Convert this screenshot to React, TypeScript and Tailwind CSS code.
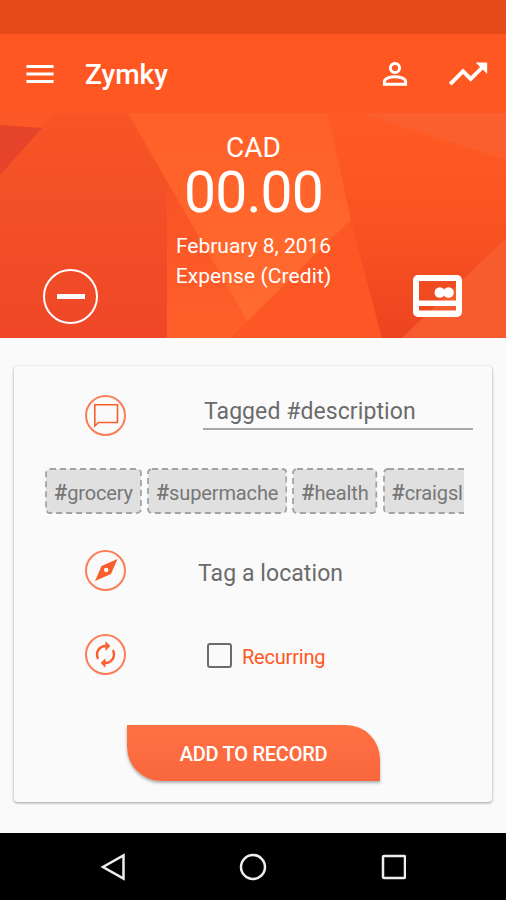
import type { ReactNode } from 'react';
import { MdMenu, MdTrendingUp } from 'react-icons/md';

const tags = ['grocery', 'supermache', 'health', 'craigsl'];

function HeroBackdrop() {
  return (
    <svg className="absolute inset-0 h-full w-full" viewBox="0 113 506 225" preserveAspectRatio="none">
      <defs>
        <linearGradient id="left" x1="0" y1="0" x2="0" y2="1">
          <stop offset="0" stopColor="#f85426" />
          <stop offset="0.4" stopColor="#f25027" />
          <stop offset="1" stopColor="#ef4728" />
        </linearGradient>
        <linearGradient id="right" x1="0" y1="0" x2="0" y2="1">
          <stop offset="0" stopColor="#ff5a24" />
          <stop offset="0.45" stopColor="#fb5422" />
          <stop offset="1" stopColor="#ec4420" />
        </linearGradient>
        <linearGradient id="mid" x1="0" y1="0" x2="0" y2="1">
          <stop offset="0" stopColor="#f75225" />
          <stop offset="1" stopColor="#ff6029" />
        </linearGradient>
        <linearGradient id="center" x1="0" y1="0" x2="0" y2="1">
          <stop offset="0" stopColor="#ff6028" />
          <stop offset="1" stopColor="#ff6b30" />
        </linearGradient>
      </defs>
      <rect y="113" width="506" height="225" fill="url(#left)" />
      <polygon points="0,113 52,113 42,128 0,125" fill="#fb5926" />
      <polygon points="0,125 42,128 0,175" fill="#e6442a" />
      <polygon points="167,180 260,338 167,338" fill="url(#mid)" />
      <polygon points="128,113 328,113 351,220 248,322" fill="url(#center)" />
      <polygon points="351,220 230,338 382,338" fill="#fc5724" />
      <polygon points="328,113 506,113 506,338 382,338 351,220" fill="url(#right)" />
      <polygon points="360,113 506,113 506,160" fill="#fa5f2d" />
      <polygon points="506,238 506,338 402,338" fill="#f75c2f" />
    </svg>
  );
}

function RoundIcon({ children }: { children: ReactNode }) {
  return (
    <span className="flex size-[41px] items-center justify-center rounded-full border-2 border-[#fa7e58] text-[#f95f2d]">
      {children}
    </span>
  );
}

function TagChip({ label }: { label: string }) {
  return (
    <div className="relative h-[46px] shrink-0 pl-[9px] pr-[9px] text-xl leading-[49px] tracking-[-0.13px] text-[#777]">
      <svg className="absolute inset-0 h-full w-full">
        <rect
          x="1"
          y="1"
          rx="4"
          className="h-[calc(100%-2px)] w-[calc(100%-2px)]"
          fill="#e0e0e0"
          stroke="#a3a3a3"
          strokeWidth="1.8"
          strokeDasharray="6 4"
        />
      </svg>
      <span className="relative">
        <span className="text-[22px] font-medium text-[#757575]">#</span>
        {label}
      </span>
    </div>
  );
}

export default function App() {
  return (
    <div className="flex h-[900px] w-[506px] flex-col overflow-hidden bg-[#fafafa] font-['Roboto',sans-serif]">
      <div className="h-[34px] shrink-0 bg-[#e64a19]" />

      <header className="flex h-[79px] shrink-0 items-center bg-[#ff5722] pl-[22px] pr-[15px] text-white">
        <MdMenu size={36} />
        <h1 className="ml-[27px] pt-[3px] text-[28px] font-medium leading-none">Zymky</h1>
        <svg className="ml-auto size-9" viewBox="0 0 24 24" fill="none" stroke="currentColor" strokeWidth="2">
          <circle cx="12" cy="8" r="3.05" />
          <path d="M4.95 18.9v-1.9c0-2.1 4.2-3.25 7.05-3.25s7.05 1.15 7.05 3.25v1.9z" />
        </svg>
        <MdTrendingUp size={46} className="ml-[32px]" />
      </header>

      <section className="relative h-[225px] shrink-0 text-white">
        <HeroBackdrop />
        <div className="relative flex flex-col items-center pl-px pt-[19px]">
          <div className="text-[28px] leading-8">CAD</div>
          <div className="text-[57px] leading-[58px] tracking-[-0.8px]">00.00</div>
          <div className="mt-[9px] text-[21px] leading-[30px]">February 8, 2016</div>
          <div className="text-[21px] leading-[30px] tracking-[0.1px]">Expense (Credit)</div>
        </div>
        <div className="absolute left-[43px] top-[156px] flex size-[55px] items-center justify-center rounded-full border-2 border-white">
          <span className="h-[5px] w-7 bg-white" />
        </div>
        <svg className="absolute left-[413px] top-[162px] h-[43px] w-[49px]" viewBox="0 0 49 43">
          <path
            fill="#fff"
            fillRule="evenodd"
            d="M5 0h39a5 5 0 0 1 5 5v32a5 5 0 0 1-5 5H5a5 5 0 0 1-5-5V5a5 5 0 0 1 5-5zM6 6v19.500h37V6zM6 31v4.500h37V31z"
          />
          <circle cx="26.800" cy="17.500" r="5.300" fill="#fff" />
          <circle cx="35.500" cy="17.500" r="5.300" fill="#fff" />
        </svg>
      </section>

      <main className="mx-[14px] mt-[28px] flex h-[436px] shrink-0 flex-col rounded-[4px] bg-[#fafafa] shadow-[0_1px_3px_rgba(0,0,0,0.38)]">
        <div className="flex h-[64px] items-end pl-[71px]">
          <div className="mb-[-6px]">
            <RoundIcon>
              <svg className="size-[26px]" viewBox="0 0 26 26" fill="none" stroke="currentColor" strokeWidth="1.6">
                <path d="M1.800 1.800h22.700v17.700H5.500l-3.700 3.500z" />
              </svg>
            </RoundIcon>
          </div>
          <div className="ml-[77px] h-[36px] w-[270px] border-b-2 border-[#a9a9a9] pl-px pt-[2px] text-[23px] leading-8 tracking-[0.08px] text-[#6b6b6b]">
            Tagged #description
          </div>
        </div>

        <div className="ml-[31px] mt-[38px] flex w-[419px] gap-[5px] overflow-hidden">
          {tags.map((tag) => (
            <TagChip key={tag} label={tag} />
          ))}
        </div>

        <div className="mt-[35px] flex h-[42px] items-center pl-[71px]">
          <RoundIcon>
            <svg className="size-6" viewBox="0 0 24 24" fill="currentColor" fillRule="evenodd">
              <path d="M23.500 1 17 16 1 23 7.500 8zM12.200 9.800a2.200 2.200 0 1 0 0 4.400 2.200 2.200 0 0 0 0-4.400z" />
            </svg>
          </RoundIcon>
          <span className="ml-[72px] mt-[7px] text-[23px] leading-7 tracking-[0.08px] text-[#6b6b6b]">Tag a location</span>
        </div>

        <div className="mt-[42px] flex h-[42px] items-center pl-[71px]">
          <RoundIcon>
            <svg className="size-[29px]" viewBox="0 0 24 24" fill="currentColor">
              <path d="M12 6v3l4-4-4-4v3c-4.420 0-8 3.580-8 8 0 1.570.460 3.030 1.240 4.260L6.700 14.800A5.870 5.870 0 0 1 6 12c0-3.310 2.690-6 6-6zm6.760 1.740L17.300 9.200c.440.840.700 1.790.700 2.800 0 3.310-2.690 6-6 6v-3l-4 4 4 4v-3c4.420 0 8-3.580 8-8 0-1.570-.460-3.030-1.240-4.260z" />
            </svg>
          </RoundIcon>
          <span className="ml-[81px] mt-[3px] size-[25px] rounded-[3px] border-[2.500px] border-[#6b6b6b]" />
          <span className="ml-[10px] mt-[5px] text-xl leading-6 tracking-[-0.2px] text-[#ff5722]">Recurring</span>
        </div>

        <button className="ml-[113px] mt-[50px] h-14 w-[253px] rounded-bl-[34px] rounded-tr-[34px] bg-linear-to-b from-[#ff7043] to-[#f9683d] pt-px text-xl font-medium tracking-[-0.25px] text-white shadow-[0_2px_3px_rgba(0,0,0,0.3)]">
          ADD TO RECORD
        </button>
      </main>

      <nav className="mt-auto flex h-[67px] shrink-0 items-center justify-between bg-black px-[100px]">
        <svg className="h-7 w-[26px]" viewBox="0 0 26 28" fill="none" stroke="#eee" strokeWidth="2.500">
          <path d="M23.500 2.500v23L3 14z" />
        </svg>
        <svg className="size-7" viewBox="0 0 28 28" fill="none" stroke="#eee" strokeWidth="2.500">
          <circle cx="14" cy="14" r="12" />
        </svg>
        <svg className="size-[26px]" viewBox="0 0 26 26" fill="none" stroke="#eee" strokeWidth="2.500">
          <rect x="3" y="2" width="22" height="22" rx="1" />
        </svg>
      </nav>
    </div>
  );
}
